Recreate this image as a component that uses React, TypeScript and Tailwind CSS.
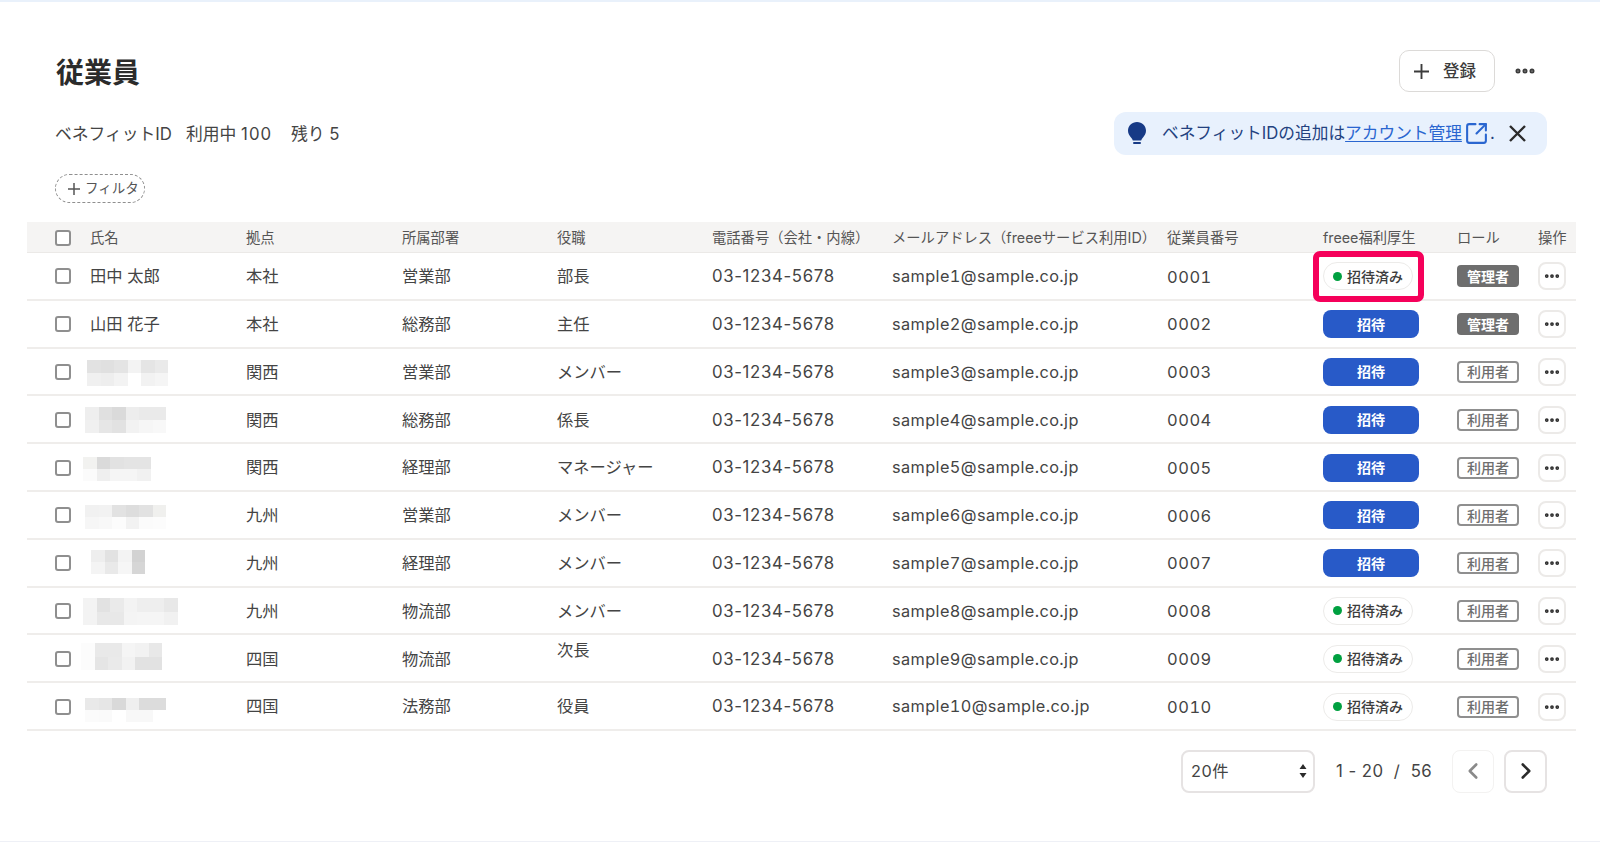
import { ChevronLeft, ChevronRight, Ellipsis, SquareArrowOutUpRight } from "lucide-react";

type Employee = {
  name?: string;
  mosaic?: { place: string; height: string; cells: string[][] };
  base: string;
  dept: string;
  title: string;
  email: string;
  no: string;
  status: "sent" | "invite";
  role: "管理者" | "利用者";
};

const employees: Employee[] = [
  { name: "田中 太郎", base: "本社", dept: "営業部", title: "部長", email: "sample1@sample.co.jp", no: "0001", status: "sent", role: "管理者" },
  { name: "山田 花子", base: "本社", dept: "総務部", title: "主任", email: "sample2@sample.co.jp", no: "0002", status: "invite", role: "管理者" },
  {
    mosaic: {
      place: "mt-[3px] ml-[7px]",
      height: "h-[13px]",
      cells: [
        ["#e2e2e2", "#e0e0e0", "#e4e4e4", "#f3f3f3", "#e5e5e5", "#eaeaea"],
        ["#f0f0f0", "#eeeeee", "#f3f3f3", "#ffffff", "#f2f2f2", "#f5f5f5"],
      ],
    },
    base: "関西",
    dept: "営業部",
    title: "メンバー",
    email: "sample3@sample.co.jp",
    no: "0003",
    status: "invite",
    role: "利用者",
  },
  {
    mosaic: {
      place: "ml-[5px]",
      height: "h-[13px]",
      cells: [
        ["#eeeeee", "#e0e0e0", "#dadada", "#ededed", "#eaeaea", "#eaeaea"],
        ["#f0f0f0", "#e6e6e6", "#e2e2e2", "#f2f2f2", "#f6f6f6", "#f8f8f8"],
      ],
    },
    base: "関西",
    dept: "総務部",
    title: "係長",
    email: "sample4@sample.co.jp",
    no: "0004",
    status: "invite",
    role: "利用者",
  },
  {
    mosaic: {
      place: "mt-[2px] ml-[3px]",
      height: "h-[12px]",
      cells: [
        ["#f2f2f0", "#dadada", "#e2e2e2", "#e4e4e4", "#e4e4e4"],
        ["#fbfbfb", "#efefef", "#f5f5f5", "#f5f5f5", "#f1f1f1"],
      ],
    },
    base: "関西",
    dept: "経理部",
    title: "マネージャー",
    email: "sample5@sample.co.jp",
    no: "0005",
    status: "invite",
    role: "利用者",
  },
  {
    mosaic: {
      place: "mt-[3px] ml-[5px]",
      height: "h-[12px]",
      cells: [
        ["#f1f1f1", "#f2f2f2", "#e2e2e2", "#dddddd", "#e2e2e2", "#f0f0ee"],
        ["#f6f6f6", "#f8f8f8", "#fcfcfc", "#f2f2f2", "#fbfbfb", "#fcfcfc"],
      ],
    },
    base: "九州",
    dept: "営業部",
    title: "メンバー",
    email: "sample6@sample.co.jp",
    no: "0006",
    status: "invite",
    role: "利用者",
  },
  {
    mosaic: {
      place: "mb-[3px] ml-[11px]",
      height: "h-[12px]",
      cells: [
        ["#eeeeee", "#e2e2e2", "#f3f3f3", "#d2d2d2"],
        ["#f4f4f4", "#e9e9e9", "#f6f6f6", "#d6d6d6"],
      ],
    },
    base: "九州",
    dept: "経理部",
    title: "メンバー",
    email: "sample7@sample.co.jp",
    no: "0007",
    status: "invite",
    role: "利用者",
  },
  {
    mosaic: {
      place: "mt-[2px] ml-[3px]",
      height: "h-[13.5px]",
      cells: [
        ["#f3f3f3", "#e2e2e2", "#eaeaea", "#f3f3f3", "#eeeeee", "#eeeeee", "#e8e8e8"],
        ["#f3f3f3", "#e8e8e8", "#e8e8e8", "#f4f4f4", "#f5f5f5", "#f5f5f5", "#f1f1f1"],
      ],
    },
    base: "九州",
    dept: "物流部",
    title: "メンバー",
    email: "sample8@sample.co.jp",
    no: "0008",
    status: "sent",
    role: "利用者",
  },
  {
    mosaic: {
      place: "mb-[4px] ml-[1px]",
      height: "h-[13.5px]",
      cells: [
        ["#fcfcfc", "#e9e9e9", "#e9e9e9", "#f5f5f5", "#f2f2f2", "#e8e8e8"],
        ["#fcfcfc", "#e5e5e5", "#eaeaea", "#f2f2f2", "#e2e2e2", "#e2e2e2"],
      ],
    },
    base: "四国",
    dept: "物流部",
    title: "次長",
    email: "sample9@sample.co.jp",
    no: "0009",
    status: "sent",
    role: "利用者",
  },
  {
    mosaic: {
      place: "mt-[7px] ml-[5px]",
      height: "h-[12px]",
      cells: [
        ["#e9e9e9", "#e6e6e6", "#d9d9d9", "#efefef", "#dcdcdc", "#dcdcdc"],
        ["#fbfbfb", "#fafafa", "#ffffff", "#f8f8f8", "#f8f8f8", "#ffffff"],
      ],
    },
    base: "四国",
    dept: "法務部",
    title: "役員",
    email: "sample10@sample.co.jp",
    no: "0010",
    status: "sent",
    role: "利用者",
  },
];

const columns = "grid grid-cols-[53px_166px_156px_155px_155px_180px_275px_156px_134px_81px_38px] items-center";

function Checkbox() {
  return <span className="ml-[28px] block h-4 w-4 rounded-[3px] border-2 border-[#8f8f8f] bg-white" />;
}

function PlusMark({ className }: { className: string }) {
  return (
    <svg viewBox="0 0 16 16" className={className} fill="none" stroke="currentColor" strokeWidth={2}>
      <path d="M8 0v16M0 8h16" />
    </svg>
  );
}

function Mosaic({ mosaic }: { mosaic: NonNullable<Employee["mosaic"]> }) {
  return (
    <div className={mosaic.place}>
      {mosaic.cells.map((row, r) => (
        <div key={r} className="flex">
          {row.map((color, c) => (
            <span key={c} className={`w-[13.5px] ${mosaic.height}`} style={{ backgroundColor: color }} />
          ))}
        </div>
      ))}
    </div>
  );
}

function Status({ status, highlight }: { status: Employee["status"]; highlight: boolean }) {
  if (status === "invite") {
    return (
      <button className="flex h-[28px] w-[96px] items-center justify-center rounded-lg bg-[#285ac8] text-[14px] font-bold text-white">
        招待
      </button>
    );
  }
  return (
    <div className="relative flex h-[28px] w-[90px] items-center rounded-full border border-[#ecebe9] bg-white pl-[9px] text-[14px] font-medium text-[#3c3c3c]">
      <span className="mr-[5px] h-[9px] w-[9px] rounded-full bg-[#00a040]" />
      招待済み
      {highlight ? (
        <span className="absolute -top-[12px] -left-[11px] h-[51px] w-[111px] rounded-[7px] border-[6px] border-[#f5005a]" />
      ) : null}
    </div>
  );
}

function Role({ role }: { role: Employee["role"] }) {
  if (role === "管理者") {
    return (
      <span className="flex h-[22px] w-[62px] items-center justify-center rounded-[4px] bg-[#6e6e6e] text-[14px] font-bold text-white">
        管理者
      </span>
    );
  }
  return (
    <span className="flex h-[22px] w-[62px] items-center justify-center rounded-[4px] border-2 border-[#8f8f8f] bg-white text-[14px] font-medium text-[#6e6e6e]">
      利用者
    </span>
  );
}

export default function App() {
  return (
    <div className="flex h-[842px] w-full flex-col overflow-hidden bg-white font-['Inter','Noto_Sans_CJK_JP',sans-serif] text-[#444444]">
      <div className="h-[2px] bg-[#e9f1fb]" />

      <header className="mt-[48px] flex h-[42px] items-center justify-between pr-[63px] pl-[56px]">
        <h1 className="mt-[4px] text-[28px] font-bold text-[#2b2b2b]">従業員</h1>
        <div className="flex items-center gap-[18px]">
          <button className="flex h-[42px] w-[96px] items-center rounded-[10px] border border-[#dcdad8] pl-[14px] text-[16.500px] font-medium text-[#3c3c3c]">
            <PlusMark className="mr-[14px] h-[15px] w-[15px]" />
            登録
          </button>
          <Ellipsis className="h-[24px] w-[24px] text-[#3c3c3c]" strokeWidth={3} />
        </div>
      </header>

      <div className="mt-[20px] flex h-[43px] items-center justify-between pr-[53px] pl-[55px]">
        <p className="mt-[2px] flex text-[16.8px] text-[#444444]">
          <span className="w-[131px]">ベネフィットID</span>
          <span className="w-[105px]">
            利用中 <span className="tracking-[1px]">100</span>
          </span>
          <span>
            残り <span className="tracking-[1px]">5</span>
          </span>
        </p>
        <div className="flex h-[43px] w-[433px] items-center rounded-xl bg-[#e8f1fd] pl-[14px] text-[16.7px] text-[#23417f]">
          <svg viewBox="0 0 18 24" className="mr-[16px] h-[24px] w-[18px] fill-[#173a86]">
            <path d="M9 0C4 0 0 3.8 0 8.7c0 3.1 1.500 5 3 6.7.9 1 1.600 1.900 1.800 3h8.400c.2-1.100.9-2 1.800-3 1.500-1.700 3-3.600 3-6.700C18 3.800 14 0 9 0z" />
            <rect x="5" y="20" width="8" height="2" rx="1" />
          </svg>
          ベネフィットIDの追加は
          <a className="text-[#2a66d0] underline underline-offset-2">アカウント管理</a>
          <SquareArrowOutUpRight className="mr-[1px] ml-[2px] h-[25px] w-[25px] text-[#2a66d0]" strokeWidth={2} />
          .
          <svg viewBox="0 0 17 17" className="ml-[14px] h-[17px] w-[17px] text-[#2b2b2b]" fill="none" stroke="currentColor" strokeWidth={2.4}>
            <path d="M1 1l15 15M16 1L1 16" />
          </svg>
        </div>
      </div>

      <div className="mt-[19px] pl-[55px]">
        <button className="flex h-[29px] w-[90px] items-center gap-[5px] rounded-full border border-dashed border-[#8f8f8f] pl-[12px] text-[13.5px] text-[#555555]">
          <PlusMark className="h-[12px] w-[12px]" />
          フィルタ
        </button>
      </div>

      <div className="mt-[19px] mr-[24px] ml-[27px] text-[16.3px]">
        <div className={`${columns} h-[31px] border-b border-[#ebe9e7] bg-[#f5f4f3] pt-[2px] text-[14.3px] text-[#555555]`}>
          <Checkbox />
          <span className="pl-[10px]">氏名</span>
          <span>拠点</span>
          <span>所属部署</span>
          <span>役職</span>
          <span>電話番号（会社・内線）</span>
          <span>メールアドレス（freeeサービス利用ID）</span>
          <span>従業員番号</span>
          <span>freee福利厚生</span>
          <span>ロール</span>
          <span>操作</span>
        </div>
        {employees.map((e, i) => (
          <div key={e.no} className={`${columns} h-[47.8px] border-b-2 border-[#efedeb] pt-[1px]`}>
            <Checkbox />
            {e.mosaic ? <Mosaic mosaic={e.mosaic} /> : <span className="pl-[10px]">{e.name}</span>}
            <span>{e.base}</span>
            <span>{e.dept}</span>
            <span className={e.title === "次長" ? "mb-[18px]" : undefined}>{e.title}</span>
            <span className="pt-[1px] text-[16.8px] tracking-[0.65px]">03-1234-5678</span>
            <span className="tracking-[0.4px] tabular-nums">{e.email}</span>
            <span className="pt-[1px] text-[16.5px] tracking-[0.5px] tabular-nums">{e.no}</span>
            <Status status={e.status} highlight={i === 0} />
            <Role role={e.role} />
            <button className="flex h-[28px] w-[28px] items-center justify-center rounded-lg border-2 border-[#eceae8] text-[#2b2b2b]">
              <Ellipsis className="h-[18px] w-[18px]" strokeWidth={3} />
            </button>
          </div>
        ))}
      </div>

      <div className="mt-[19px] flex items-center pl-[1181px]">
        <div className="flex h-[43px] w-[134px] items-center justify-between rounded-lg border-2 border-[#e6e3e3] pr-[6px] pl-[8px] text-[16.3px]">
          <span className="tracking-[0.5px]">20件</span>
          <svg viewBox="0 0 8 16" className="h-[16px] w-[8px] fill-[#2b2b2b]">
            <path d="M4 1l3.500 5h-7zM4 15L.5 10h7z" />
          </svg>
        </div>
        <span className="ml-[21px] w-[116px] text-[16.8px] tracking-[0.45px] whitespace-pre">1 - 20  /  56</span>
        <button className="flex h-[43px] w-[42px] items-center justify-center rounded-lg border border-[#f3f2f1] text-[#8a8a8a]">
          <ChevronLeft className="h-[26px] w-[26px]" strokeWidth={2.4} />
        </button>
        <button className="ml-[10px] flex h-[43px] w-[43px] items-center justify-center rounded-lg border-2 border-[#e6e3e3] text-[#2b2b2b]">
          <ChevronRight className="h-[26px] w-[26px]" strokeWidth={2.4} />
        </button>
      </div>

      <div className="mt-auto h-[1px] bg-[#eef0f6]" />
    </div>
  );
}
